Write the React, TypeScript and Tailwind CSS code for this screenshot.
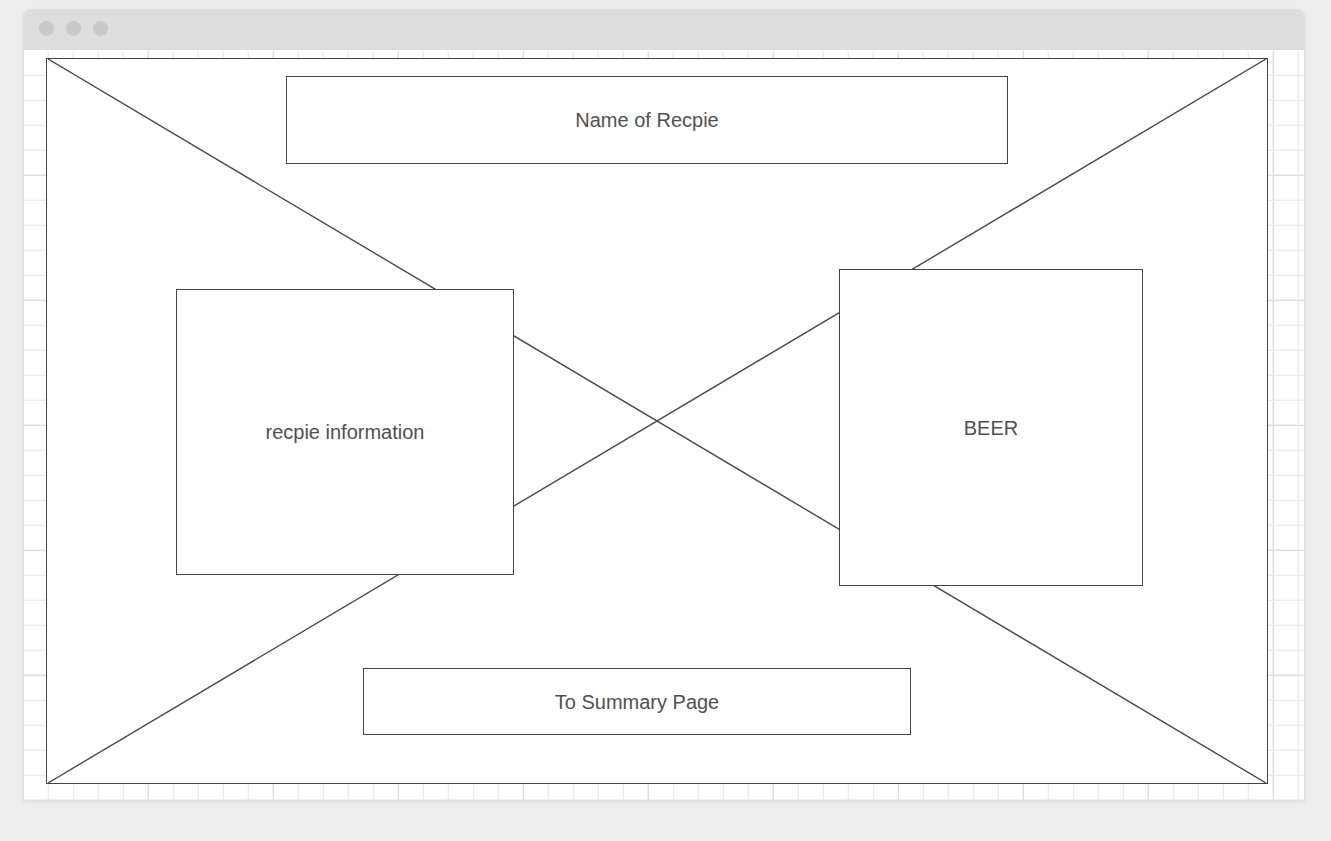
import type { ReactNode } from "react";

function Panel({ className, children }: { className: string; children: ReactNode }) {
  return (
    <section className={`flex items-center justify-center border border-[#444] bg-white ${className}`}>
      {children}
    </section>
  );
}

function TitleBar() {
  return (
    <header className="flex h-[41px] items-center gap-3 rounded-t-lg bg-[#ddd] px-4 pb-0.5">
      <span className="size-[15px] rounded-full bg-[#c9c9c9]" />
      <span className="size-[15px] rounded-full bg-[#c9c9c9]" />
      <span className="size-[15px] rounded-full bg-[#c9c9c9]" />
    </header>
  );
}

function Grid() {
  return (
    <svg className="absolute inset-0 size-full" aria-hidden="true">
      <defs>
        <pattern id="minor" x="-1" width="25" height="25" patternUnits="userSpaceOnUse">
          <path d="M0 24.5H25M24.5 0V25" stroke="#f8f8f8" strokeWidth="1" />
          <path d="M0 .5H25M.5 0V25" stroke="#ebebeb" strokeWidth="1" />
        </pattern>
        <pattern id="major" x="-1" width="125" height="125" patternUnits="userSpaceOnUse">
          <path d="M0 124.5H125M124.5 0V125" stroke="#f1f1f1" strokeWidth="1" />
          <path d="M0 .5H125M.5 0V125" stroke="#dedede" strokeWidth="1" />
        </pattern>
      </defs>
      <rect y="1" width="100%" height="100%" fill="url(#minor)" />
      <rect y="1" width="100%" height="100%" fill="url(#major)" />
    </svg>
  );
}

function Diagonals() {
  return (
    <svg
      className="absolute inset-0 size-full"
      viewBox="0 0 1220 724"
      preserveAspectRatio="none"
      aria-hidden="true"
    >
      <path d="M1 0L1219 724M1219 0L1 724" stroke="#4a4a4a" strokeWidth="1.4" fill="none" />
    </svg>
  );
}

export default function App() {
  return (
    <div className="min-h-screen bg-[#eee] pt-[9px] pr-[26px] pb-10 pl-[23px] font-['Liberation_Sans',Arial,sans-serif] text-xl leading-6 text-[#505050]">
      <div className="rounded-t-lg shadow-[0_1px_4px_rgba(0,0,0,0.08)]">
        <TitleBar />
        <main className="relative border border-t-0 border-[#dedede] bg-white pt-2 pr-9 pb-4 pl-[22px]">
          <Grid />
          <div className="relative border border-[#444] bg-white">
            <Diagonals />
            <div className="relative pt-[17px] pb-12">
              <div className="pr-[259px] pl-[239px]">
                <Panel className="h-[88px]">
                  <h1>Name of Recpie</h1>
                </Panel>
              </div>
              <div className="mt-[105px] grid grid-cols-[338fr_325fr_304fr] items-start pr-[124px] pl-[129px]">
                <Panel className="mt-5 h-[286px]">
                  <p>recpie information</p>
                </Panel>
                <Panel className="col-start-3 h-[317px]">
                  <p>BEER</p>
                </Panel>
              </div>
              <div className="mt-[82px] flex pr-[356px] pl-[316px]">
                <button type="button" className="h-[67px] flex-1 border border-[#444] bg-white">
                  To Summary Page
                </button>
              </div>
            </div>
          </div>
        </main>
      </div>
    </div>
  );
}
